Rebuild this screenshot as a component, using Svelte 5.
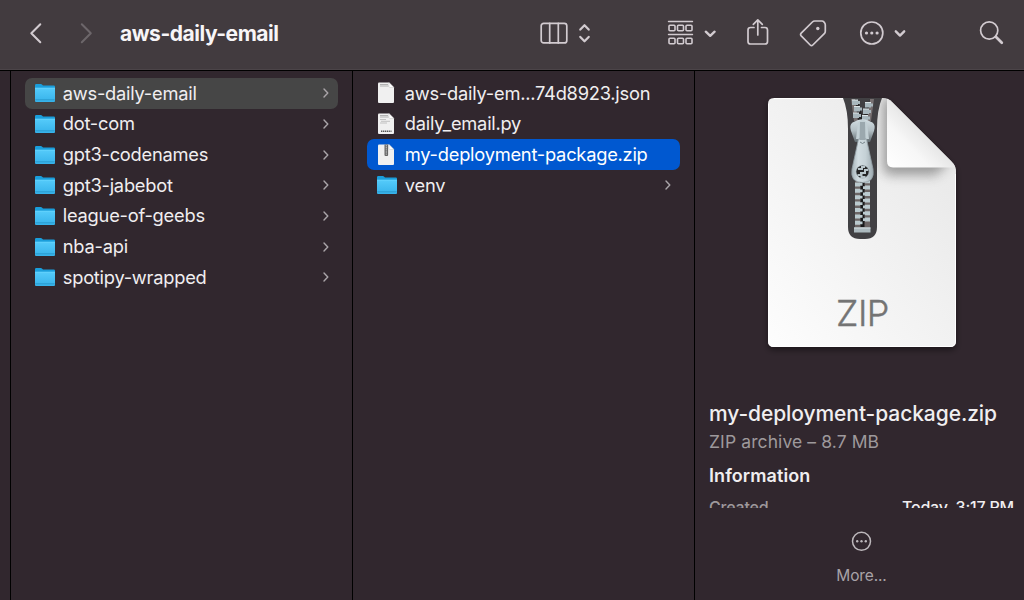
<script>
    const folders = [
        "aws-daily-email",
        "dot-com",
        "gpt3-codenames",
        "gpt3-jabebot",
        "league-of-geebs",
        "nba-api",
        "spotipy-wrapped",
    ];

    const files = [
        { name: "aws-daily-em...74d8923.json", type: "json" },
        { name: "daily_email.py", type: "python" },
        { name: "my-deployment-package.zip", type: "zip" },
        { name: "venv", type: "folder" },
    ];

    let openFolder = $state("aws-daily-email");
    let selected = $state("my-deployment-package.zip");

    // closed part of the zipper, one pair of teeth per entry
    const teeth = [184, 190.4, 196.8, 203.2, 209.6, 216, 222.4];
    const openTeeth = [
        [852, 100], [854, 106.5], [853, 113],
        [865, 102.5], [863, 109], [862, 115.5],
    ];
</script>

{#snippet icon(type)}
    <svg class="icon" width="22" height="24" viewBox="0 0 22 24">
        {#if type == "folder"}
            <path d="M1 4.2Q1 3 2.2 3H6.8Q7.6 3 8.2 3.8L9 4.6H19.8Q21 4.6 21 5.8V19Q21 20 20 20H2Q1 20 1 19Z" fill="#1a9edb" />
            <path d="M1 7H21V20Q21 21 20 21H2Q1 21 1 20Z" fill="url(#folderFill)" />
            <path d="M1 7.1H21" stroke="#70d8ff" stroke-width=".7" />
            <path d="M1.3 18.8H20.7" stroke="#2494c8" stroke-width=".8" />
        {:else}
            <path d="M3 1.5H13L18 6.5V21Q18 22 17 22H3Q2 22 2 21V2.5Q2 1.5 3 1.5Z" fill="#f0f0f0" />
            <path d="M13 1.5V5.5Q13 6.5 14 6.5H18Z" fill="#fff" stroke="#c5c5c5" stroke-width=".5" />
            {#if type == "zip"}
                <path d="M8.5 1.5H12.1V12Q12.1 13 11.1 13H9.5Q8.5 13 8.5 12Z" fill="#656565" />
                <path d="M10.3 2V12.3" stroke="#bbb" stroke-width="1.2" stroke-dasharray="1.4 .7" />
            {:else}
                <path d="M4 3.5H12M4 5H12.5" stroke="#aaa" stroke-width=".9" />
                {#if type == "python"}
                    <path d="M4 7.5H10M5 9.3H14M4 11H11" stroke="#b5b5b5" stroke-width=".8" />
                    <path d="M5 19.2H15.5" stroke="#555" stroke-width="1.4" stroke-dasharray="1.3 .6" />
                {/if}
            {/if}
        {/if}
    </svg>
{/snippet}

{#snippet arrow()}
    <svg class="arrow" width="8" height="12" viewBox="0 0 8 12">
        <path d="M2 2L5.8 6L2 10" />
    </svg>
{/snippet}

<svg class="defs" width="0" height="0">
    <defs>
        <linearGradient id="folderFill" x1="0" y1="0" x2="0" y2="1">
            <stop offset="0" stop-color="#55cbfa" />
            <stop offset="1" stop-color="#36b2ea" />
        </linearGradient>
    </defs>
</svg>

<div class="finder">
    <header>
        <svg class="nav-icon" width="16" height="24" viewBox="0 0 16 24">
            <path d="M12.3 3.2L3.3 12.2L12.3 21.2" stroke-width="2" />
        </svg>
        <svg class="nav-icon disabled" width="16" height="24" viewBox="0 0 16 24">
            <path d="M3.8 3.2L12.8 12.2L3.8 21.2" stroke-width="2" />
        </svg>
        <h1>aws-daily-email</h1>

        <div class="tools">
            <svg class="view" width="54" height="28" viewBox="0 0 54 28">
                <rect x="2.2" y="4.3" width="25.6" height="19.6" rx="2.5" />
                <path d="M10.7 4.3V23.9M19.3 4.3V23.9" />
                <path d="M41.3 10.6L45.5 6.2L49.7 10.6M41.3 17.9L45.5 22.3L49.7 17.9" stroke-width="2.2" />
            </svg>
            <svg class="group" width="52" height="28" viewBox="0 0 52 28">
                <path d="M1.5 2.5H25.5M1.5 15.5H25.5" stroke-width="1.4" />
                {#each [2, 10.5, 19] as x}
                    <rect {x} y="6.2" width="6" height="5.6" rx="1" stroke-width="1.6" />
                    <rect {x} y="19.2" width="6" height="5.6" rx="1" stroke-width="1.6" />
                {/each}
                <path d="M38.8 12.7L43.2 16.8L47.6 12.7" stroke-width="2.4" />
            </svg>
            <svg class="share" width="24" height="30" viewBox="0 0 24 30">
                <path d="M8 9.5H4.5Q2 9.5 2 12V23.5Q2 26 4.5 26H19Q21.5 26 21.5 23.5V12Q21.5 9.5 19 9.5H15.5" />
                <path d="M11.8 17V2M7.3 6.3L11.8 1.8L16.3 6.3" />
            </svg>
            <svg class="tag" width="30" height="30" viewBox="0 0 30 30">
                <path d="M15.7 3H23Q24 3 24.7 3.7L25.7 5Q26.3 5.8 26.3 7V13.3Q26.3 14.7 25.3 15.7L13.8 27Q12.5 28.3 11.2 27L2.2 17.8Q1 16.5 2.2 15.2L13.4 4Q14.4 3 15.7 3Z" />
                <circle class="solid" cx="18.8" cy="10.5" r="1.7" />
            </svg>
            <svg class="more" width="50" height="26" viewBox="0 0 50 26">
                <circle cx="12.8" cy="13" r="11" />
                <circle class="solid" cx="7.5" cy="13" r="1.6" />
                <circle class="solid" cx="12.8" cy="13" r="1.6" />
                <circle class="solid" cx="18.1" cy="13" r="1.6" />
                <path d="M36.8 11.3L41 15.6L45.2 11.3" stroke-width="2.4" />
            </svg>
            <svg class="search" width="26" height="26" viewBox="0 0 26 26">
                <circle cx="10.2" cy="10.5" r="8.6" />
                <path d="M16.8 16.8L22.8 22.8" stroke-width="2.7" />
            </svg>
        </div>
    </header>

    <main>
        <div class="edge"></div>
        <ul class="column">
            {#each folders as folder}
                <li>
                    <button class="row" class:open={openFolder == folder} onclick={() => (openFolder = folder)}>
                        {@render icon("folder")}
                        <span>{folder}</span>
                        {@render arrow()}
                    </button>
                </li>
            {/each}
        </ul>

        <ul class="column">
            {#each files as file}
                <li>
                    <button class="row" class:selected={selected == file.name} onclick={() => (selected = file.name)}>
                        {@render icon(file.type)}
                        <span>{file.name}</span>
                        {#if file.type == "folder"}
                            {@render arrow()}
                        {/if}
                    </button>
                </li>
            {/each}
        </ul>

        <aside>
            <div class="details">
                <svg class="archive" width="220" height="280" viewBox="755 85 220 280">
                    <defs>
                        <linearGradient id="paper" x1="0" y1="1" x2="1" y2="0">
                            <stop offset="0" stop-color="#fdfdfd" />
                            <stop offset="1" stop-color="#e6e6e6" />
                        </linearGradient>
                        <linearGradient id="fold" x1="0" y1="1" x2=".6" y2=".4">
                            <stop offset="0" stop-color="#fff" />
                            <stop offset=".5" stop-color="#f7f7f7" />
                            <stop offset="1" stop-color="#dedede" />
                        </linearGradient>
                        <linearGradient id="metal" x1="0" y1="0" x2="1" y2="0">
                            <stop offset="0" stop-color="#a5b2b8" />
                            <stop offset=".3" stop-color="#d2dde2" />
                            <stop offset=".65" stop-color="#c5d1d6" />
                            <stop offset="1" stop-color="#9eabb1" />
                        </linearGradient>
                        <linearGradient id="slider" x1="0" y1="0" x2="0" y2="1">
                            <stop offset="0" stop-color="#d2dde2" />
                            <stop offset=".5" stop-color="#b3bfc4" />
                            <stop offset="1" stop-color="#616b70" />
                        </linearGradient>
                        <filter id="drop" x="-20%" y="-20%" width="140%" height="140%">
                            <feDropShadow dx="0" dy="3" stdDeviation="3" flood-opacity=".45" />
                        </filter>
                        <filter id="foldShadow" x="-40%" y="-40%" width="180%" height="180%">
                            <feGaussianBlur stdDeviation="6" />
                        </filter>
                        <clipPath id="page">
                            <path d="M774 98H883Q888 98 892 102L951 161Q956 166 956 171V341Q956 347 950 347H774Q768 347 768 341V104Q768 98 774 98Z" />
                        </clipPath>
                    </defs>
                    <path d="M774 98H883Q888 98 892 102L951 161Q956 166 956 171V341Q956 347 950 347H774Q768 347 768 341V104Q768 98 774 98Z" fill="url(#paper)" filter="url(#drop)" />
                    <g clip-path="url(#page)">
                        <path d="M883 98V167Q883 175 892 175H936L950 160L892 98Z" fill="#777" opacity=".7" filter="url(#foldShadow)" />
                        <path d="M843 98H882Q877 110 877 129V227Q877 239 865 239H860Q848 239 848 227V129Q848 110 843 98Z" fill="#414043" />
                        <path d="M887 95V161Q887 167.5 893 167.5H958Z" fill="url(#fold)" />
                    </g>
                    <path d="M774 98.5H843M768.5 104V341Q768.5 346.5 774 346.5H950Q955.5 346.5 955.5 341V174" fill="none" stroke="#fff" />
                    <path d="M852 99H857L863 118L870 99H873L867 123H857Z" fill="#242426" />
                    <path d="M851 99H855L858 121H854ZM870 99H874L871 121H867Z" fill="#777071" />
                    {#each openTeeth as [x, y]}
                        <path d="M{x} {y}h6v1h2v3h-2v1h-6z" fill="#a8b7bd" />
                        <path d="M{x} {y}h6" stroke="#dce5e8" />
                    {/each}
                    <rect x="855" y="181" width="15" height="47" fill="#6c6565" />
                    <rect x="860.5" y="181" width="4" height="46" fill="#19191a" />
                    {#each teeth as y}
                        <path d="M855 {y - 1.6}h5v.6h2.5v2.8h-2.5v.6h-5z" fill="#bac9ce" />
                        <path d="M870 {y - 4.8}h-5v.6h-2v2.8h2v.6h5z" fill="#bac9ce" />
                    {/each}
                    <rect x="854" y="227.5" width="16.5" height="5" fill="#acb9be" />
                    <path d="M854 228H870.5" stroke="#d5dfe2" />
                    <path d="M858 120Q862.5 118.5 867 120L872.5 122.5Q876 125 874 131L870 142H855L851 131Q849 125 852.5 122.5Z" fill="url(#slider)" />
                    <path d="M858 123Q862.5 116 867 123L869 139H856Z" fill="#c3d0d5" />
                    <path fill-rule="evenodd" d="M858.5 139Q862.5 137 866.5 139L873 169Q875 182.5 862.5 182.5Q850 182.5 852 169ZM862.5 165.5A6.3 6.3 0 1 0 862.5 178.1A6.3 6.3 0 1 0 862.5 165.5" fill="url(#metal)" stroke="#93a0a6" stroke-width=".8" />
                    <path d="M860 122L859.5 140H865.5L865 122Z" fill="#9ba8ae" />
                    <path d="M860 142Q862.5 145 865 142" fill="none" stroke="#78858b" />
                    <circle cx="862.5" cy="171.8" r="6" fill="#242526" />
                    <path d="M858 169h4v-2h3M860 173h5v-3h3M857.5 175h4v2h4" fill="none" stroke="#b8c5ca" stroke-width="2" />
                    <text x="862.5" y="326.4" text-anchor="middle">ZIP</text>
                </svg>
                <h2>my-deployment-package.zip</h2>
                <p class="kind">ZIP archive – 8.7 MB</p>
                <h3>Information</h3>
                <div class="created">
                    <span>Created</span>
                    <span class="date">Today, 3:17 PM</span>
                </div>
            </div>
            <button class="actions">
                <svg width="22" height="22" viewBox="0 0 22 22">
                    <circle cx="10.5" cy="11.3" r="9" fill="none" stroke="#bdb8bc" stroke-width="1.5" />
                    <circle cx="6.2" cy="11.3" r="1.2" />
                    <circle cx="10.5" cy="11.3" r="1.2" />
                    <circle cx="14.8" cy="11.3" r="1.2" />
                </svg>
                <span>More...</span>
            </button>
        </aside>
    </main>
</div>

<style>
    :global(body) {
        background: #31272e;
        margin: 0;
    }

    .finder {
        background: #31272e;
        color: #f0eef0;
        display: flex;
        flex-direction: column;
        font-family: Inter, "Liberation Sans", sans-serif;
        height: 600px;
        overflow: hidden;
        width: 1024px;
    }

    .defs {
        height: 0;
        position: absolute;
        width: 0;
    }

    svg {
        display: block;
        flex: none;
    }

    header {
        align-items: center;
        background: #423b3f;
        border-bottom: 1px solid #000;
        box-shadow: inset 0 -1px #4b4448;
        box-sizing: border-box;
        display: flex;
        flex: none;
        height: 71px;
        padding: 0 19px 4px 28px;
    }

    header svg {
        fill: none;
        stroke: #d2cbd0;
        stroke-linecap: round;
        stroke-linejoin: round;
        stroke-width: 1.7;
    }

    header .solid {
        fill: #d2cbd0;
        stroke: none;
    }

    header .disabled {
        margin-left: 34px;
        stroke: #6c666a;
    }

    h1 {
        color: #f7f5f7;
        font-size: 21px;
        font-weight: 700;
        letter-spacing: -0.47px;
        line-height: 28px;
        margin: 0 0 0 26px;
        padding-top: 1px;
    }

    .tools {
        align-items: center;
        display: flex;
        margin-left: auto;
    }

    .group {
        margin-left: 74px;
    }

    .share {
        margin-left: 27px;
    }

    .tag {
        margin-left: 29px;
    }

    .more {
        margin-left: 30px;
    }

    .search {
        margin-left: 70px;
    }

    main {
        display: flex;
        flex: 1;
        min-height: 0;
    }

    .edge {
        border-right: 1px solid #000;
        width: 10px;
    }

    .column {
        border-right: 1px solid #000;
        box-sizing: border-box;
        list-style: none;
        margin: 0;
        padding: 7px 14px;
        width: 342px;
    }

    button {
        background: none;
        border: none;
        font-family: inherit;
    }

    .row {
        align-items: center;
        border-radius: 7px;
        box-sizing: border-box;
        color: inherit;
        display: flex;
        font-size: 18.3px;
        gap: 7.2px;
        height: 30.7px;
        letter-spacing: -0.24px;
        padding: 0 8px 0 8.6px;
        text-align: left;
        width: 100%;
    }

    .row span {
        flex: 1;
        padding-bottom: 1.6px;
        white-space: nowrap;
    }

    .open {
        background: #464646;
    }

    .selected {
        background: #0058d0;
        color: #fff;
    }

    .arrow {
        fill: none;
        stroke: #aaa5a9;
        stroke-linecap: round;
        stroke-linejoin: round;
        stroke-width: 1.4;
    }

    aside {
        display: flex;
        flex: 1;
        flex-direction: column;
        min-width: 0;
    }

    .details {
        box-sizing: border-box;
        height: 437px;
        overflow: hidden;
        padding: 14px 10px 0 14px;
    }

    .archive {
        margin-left: 46px;
    }

    .archive text {
        fill: #747474;
        font-family: Inter, sans-serif;
        font-size: 36px;
        font-weight: 300;
        letter-spacing: -0.5px;
        stroke: #747474;
        stroke-width: 0.4px;
    }

    h2 {
        font-size: 21px;
        font-weight: 500;
        letter-spacing: -0.08px;
        line-height: 28px;
        margin: 35px 0 0;
        white-space: nowrap;
    }

    .kind {
        color: #9e999c;
        font-size: 17.5px;
        letter-spacing: 0.1px;
        line-height: 24px;
        margin: 2px 0 0;
    }

    h3 {
        font-size: 18px;
        font-weight: 600;
        letter-spacing: 0.08px;
        line-height: 24px;
        margin: 10px 0 0;
    }

    .created {
        color: #9e999c;
        display: flex;
        font-size: 16px;
        font-weight: 500;
        justify-content: space-between;
        letter-spacing: -0.2px;
        line-height: 22px;
        margin-top: 8px;
    }

    .date {
        color: #f0eef0;
    }

    .actions {
        align-items: center;
        color: #a8a3a7;
        display: flex;
        flex-direction: column;
        font-size: 15.5px;
        gap: 14px;
        letter-spacing: -0.15px;
        line-height: 20px;
        margin: 0;
        padding: 22px 0 0 4px;
    }

    .actions svg {
        fill: #bdb8bc;
    }
</style>
